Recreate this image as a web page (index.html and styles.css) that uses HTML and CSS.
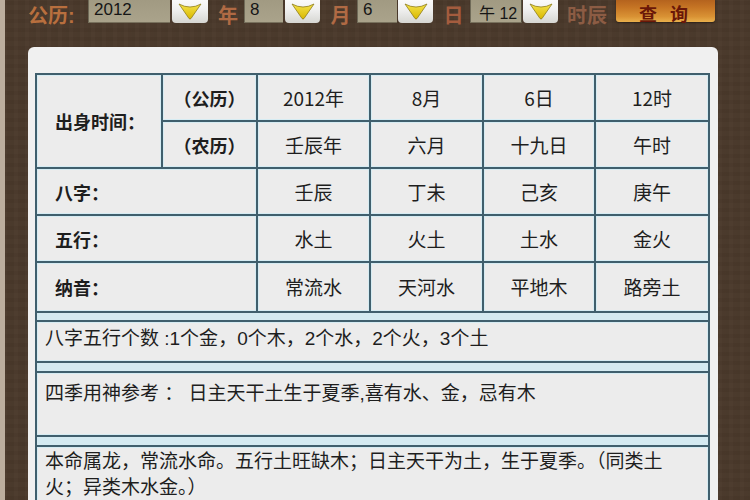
FILE: index.html
```html
<!DOCTYPE html>
<html lang="zh-CN">
<head>
<meta charset="utf-8">
<title>八字查询</title>
<link rel="stylesheet" href="styles.css">
</head>
<body>
<div class="page">
  <div class="edge"></div>
  <div class="main">
    <div class="toolbar">
      <span class="lbl lbl-first">公历:</span>
      <span class="sel sel-year">2012</span>
      <span class="drop"><svg width="24" height="18" viewBox="0 0 24 18"><defs><linearGradient id="tri" x1="0" y1="0" x2="0" y2="1"><stop offset="0" stop-color="#f4e24a"/><stop offset="1" stop-color="#d9b800"/></linearGradient></defs><path d="M1 2 Q12 8 23 2 L13 16.5 Q12 17.6 11 16.5 Z" fill="url(#tri)" stroke="#8f7d1c" stroke-width="0.8"/></svg></span>
      <span class="lbl lbl-unit">年</span>
      <span class="sel sel-month">8</span>
      <span class="drop drop-s"><svg width="24" height="18" viewBox="0 0 24 18"><path d="M1 2 Q12 8 23 2 L13 16.5 Q12 17.6 11 16.5 Z" fill="url(#tri)" stroke="#8f7d1c" stroke-width="0.8"/></svg></span>
      <span class="lbl lbl-unit lbl-m">月</span>
      <span class="sel sel-day">6</span>
      <span class="drop drop-s drop-n"><svg width="24" height="18" viewBox="0 0 24 18"><path d="M1 2 Q12 8 23 2 L13 16.5 Q12 17.6 11 16.5 Z" fill="url(#tri)" stroke="#8f7d1c" stroke-width="0.8"/></svg></span>
      <span class="lbl lbl-unit lbl-d">日</span>
      <span class="sel sel-hour">午 12</span>
      <span class="drop drop-s drop-n"><svg width="24" height="18" viewBox="0 0 24 18"><path d="M1 2 Q12 8 23 2 L13 16.5 Q12 17.6 11 16.5 Z" fill="url(#tri)" stroke="#8f7d1c" stroke-width="0.8"/></svg></span>
      <span class="lbl lbl-time">时辰</span>
      <span class="query"><span>查</span><span>询</span></span>
    </div>
    <div class="panel">
      <div class="chart">
        <table class="bazi">
          <colgroup>
            <col class="c1"><col class="c2"><col class="c3"><col class="c4"><col class="c5"><col class="c6">
          </colgroup>
          <tr>
            <td rowspan="2" class="label">出身时间：</td>
            <td class="label label-c">（公历）</td>
            <td>2012年</td><td>8月</td><td>6日</td><td>12时</td>
          </tr>
          <tr>
            <td class="label label-c">（农历）</td>
            <td>壬辰年</td><td>六月</td><td>十九日</td><td>午时</td>
          </tr>
          <tr>
            <td colspan="2" class="label">八字：</td>
            <td>壬辰</td><td>丁未</td><td>己亥</td><td>庚午</td>
          </tr>
          <tr>
            <td colspan="2" class="label">五行：</td>
            <td>水土</td><td>火土</td><td>土水</td><td>金火</td>
          </tr>
          <tr>
            <td colspan="2" class="label">纳音：</td>
            <td>常流水</td><td>天河水</td><td>平地木</td><td>路旁土</td>
          </tr>
        </table>
        <div class="box box-count">八字五行个数 :1个金，0个木，2个水，2个火，3个土</div>
        <div class="box box-season">四季用神参考 ： 日主天干土生于夏季,喜有水、金，忌有木</div>
        <div class="box box-life">本命属龙，常流水命。五行土旺缺木；日主天干为土，生于夏季。（同类土火；异类木水金。）</div>
      </div>
    </div>
  </div>
</div>
</body>
</html>
```

FILE: styles.css
```css
html, body {
  margin: 0;
  padding: 0;
}

body {
  width: 750px;
  height: 500px;
  overflow: hidden;
  background-color: #4a392b;
  background-image:
    repeating-linear-gradient(90deg, rgba(0,0,0,0.025) 0 3px, rgba(255,255,255,0.012) 3px 7px, rgba(0,0,0,0.015) 7px 11px),
    repeating-linear-gradient(0deg, rgba(0,0,0,0.02) 0 4px, rgba(255,255,255,0.01) 4px 9px);
  font-family: "Noto Sans CJK SC", "Liberation Sans", sans-serif;
  color: #1e1e1e;
}

.page {
  display: flex;
  height: 500px;
}

.edge {
  width: 5px;
  flex: none;
  background: #bcae9e;
}

.main {
  padding-left: 23px;
  width: 690px;
}

/* ---------- top toolbar ---------- */
.toolbar {
  display: flex;
  align-items: flex-start;
  height: 28px;
  margin-top: -5px;
  font-family: "Liberation Sans", "Noto Sans CJK SC", sans-serif;
}

.lbl {
  font-size: 20px;
  font-weight: bold;
  color: #b86f3e;
  line-height: normal;
  margin-top: 5px;
  text-align: center;
  flex: none;
}

.lbl-first {
  width: 60px;
  text-align: left;
}

.lbl-unit {
  width: 36px;
  padding-left: 4px;
  box-sizing: border-box;
  color: #b06a44;
}

.lbl-m { width: 37px; }
.lbl-d { width: 37px; color: #a35c3e; }

.lbl-time {
  width: 58px;
  color: #8c5c44;
}

.sel {
  flex: none;
  height: 28px;
  box-sizing: border-box;
  background: linear-gradient(#9f9880, #aaa38b);
  border-left: 1px solid #6f6a58;
  border-bottom: 1px solid #77705c;
  font-size: 17px;
  line-height: normal;
  padding: 5px 0 0 5px;
  color: #161616;
}

.sel-year { width: 82px; }
.sel-month { width: 39px; }
.sel-day { width: 40px; }
.sel-hour {
  width: 52px;
  font-size: 16px;
  padding-left: 8px;
  border-right: 1px solid #55513f;
}

.drop {
  flex: none;
  width: 36px;
  height: 28px;
  margin-left: 2px;
  box-sizing: border-box;
  border-radius: 4px;
  background: linear-gradient(#ffffff, #f1f1f1 50%, #d6d6d2);
  display: flex;
  align-items: center;
  justify-content: center;
  padding-top: 3px;
}

.drop-s { width: 35px; }
.drop-n { margin-left: 1px; }

.query {
  flex: none;
  width: 99px;
  height: 27px;
  border-radius: 3px;
  background: linear-gradient(#a9571a, #c57424 45%, #d99234 80%, #e9b04c);
  display: flex;
  align-items: flex-start;
  justify-content: center;
  gap: 13px;
  padding: 5px 4px 0 0;
  box-sizing: border-box;
  font-size: 18px;
  line-height: normal;
  font-weight: bold;
  color: #6a1708;
  box-shadow: 0 1px 2px rgba(0,0,0,0.4);
}

/* ---------- panel ---------- */
.panel {
  margin-top: 24px;
  background: #f0f0f0;
  border-radius: 6px 6px 0 0;
  padding: 26px 8px 0 7px;
  height: 460px;
  box-sizing: border-box;
}

.chart {
  background: #d4eaf1;
  border-left: 2px solid #405f6d;
  border-right: 2px solid #405f6d;
  height: 440px;
}

.bazi {
  width: 675px;
  margin: 0 -2px;
  table-layout: fixed;
  border-collapse: separate;
  border-spacing: 0;
  border-top: 2px solid #405f6d;
  border-left: 2px solid #405f6d;
}

.c1 { width: 126px; }
.c2 { width: 95px; }
.c3 { width: 113px; }
.c4 { width: 113px; }
.c5 { width: 112px; }
.c6 { width: 114px; }

.bazi tr { height: 47px; }
.bazi tr:last-child { height: 50px; }

.bazi td {
  padding: 0;
  border-right: 2px solid #405f6d;
  border-bottom: 2px solid #405f6d;
  background: #ececec;
  box-shadow: inset 0 0 0 1px #d6ecf3;
  text-align: center;
  vertical-align: middle;
  font-size: 19px;
  line-height: 24px;
}

.bazi td.label {
  text-align: left;
  padding-left: 18px;
  font-weight: bold;
  font-size: 18px;
}

.bazi td.label-c {
  text-align: center;
  padding-left: 0;
}

.box {
  margin: 7px -2px 0;
  border: 2px solid #405f6d;
  background: #ececec;
  box-shadow: inset 0 0 0 1px #d6ecf3;
  font-family: "Liberation Sans", "Noto Sans CJK SC", sans-serif;
  font-size: 19px;
  line-height: 27px;
  padding: 0 20px 0 8px;
}

.box-count {
  padding-top: 3px;
  padding-bottom: 9px;
}

.box-season {
  margin-top: 8px;
  padding-top: 7px;
  height: 66px;
  box-sizing: border-box;
}

.box-life {
  margin-top: 8px;
  padding-top: 2px;
  padding-bottom: 10px;
  line-height: 26px;
}
```
